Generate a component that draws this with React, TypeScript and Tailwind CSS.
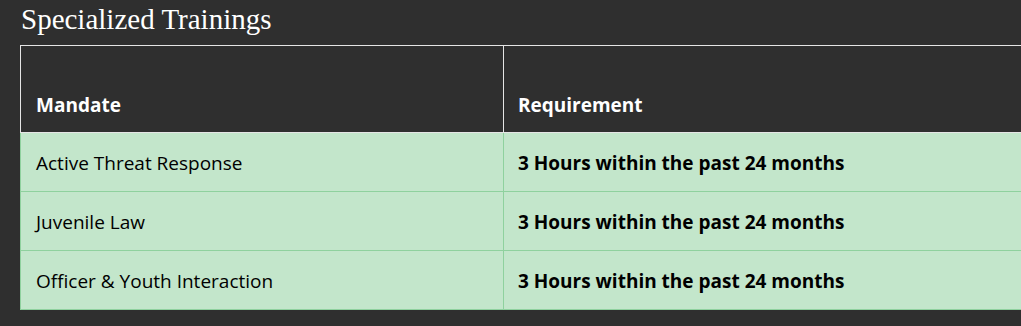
const rows = [
  { mandate: "Active Threat Response", requirement: "3 Hours within the past 24 months" },
  { mandate: "Juvenile Law", requirement: "3 Hours within the past 24 months" },
  { mandate: "Officer & Youth Interaction", requirement: "3 Hours within the past 24 months" },
];

export default function App() {
  return (
    <main className="min-h-[326px] bg-[#2f2f2f] overflow-hidden pl-5 pt-[1px]">
      <h2 className="text-[29px] leading-[37px] text-white pl-[1px] mb-[7px] font-['Liberation_Serif',serif]">
        Specialized Trainings
      </h2>
      <table className="w-[1040px] border-collapse text-[19px] font-['Open_Sans',sans-serif]">
        <thead>
          <tr className="border border-[#e5e5e5]">
            <th className="h-[87px] align-bottom text-left text-white font-bold px-[15px] pb-[13px] w-[483px] border-r border-[#e5e5e5]">
              Mandate
            </th>
            <th className="h-[87px] align-bottom text-left text-white font-bold px-[14px] pb-[13px]">
              Requirement
            </th>
          </tr>
        </thead>
        <tbody>
          {rows.map((r) => (
            <tr key={r.mandate} className="bg-[#c3e6cb] border border-[#8fd19e] text-black">
              <td className="h-[59px] px-[15px] pt-[2px] border-r border-[#8fd19e]">{r.mandate}</td>
              <td className="h-[59px] px-[14px] pt-[2px] font-bold">{r.requirement}</td>
            </tr>
          ))}
        </tbody>
      </table>
    </main>
  );
}
